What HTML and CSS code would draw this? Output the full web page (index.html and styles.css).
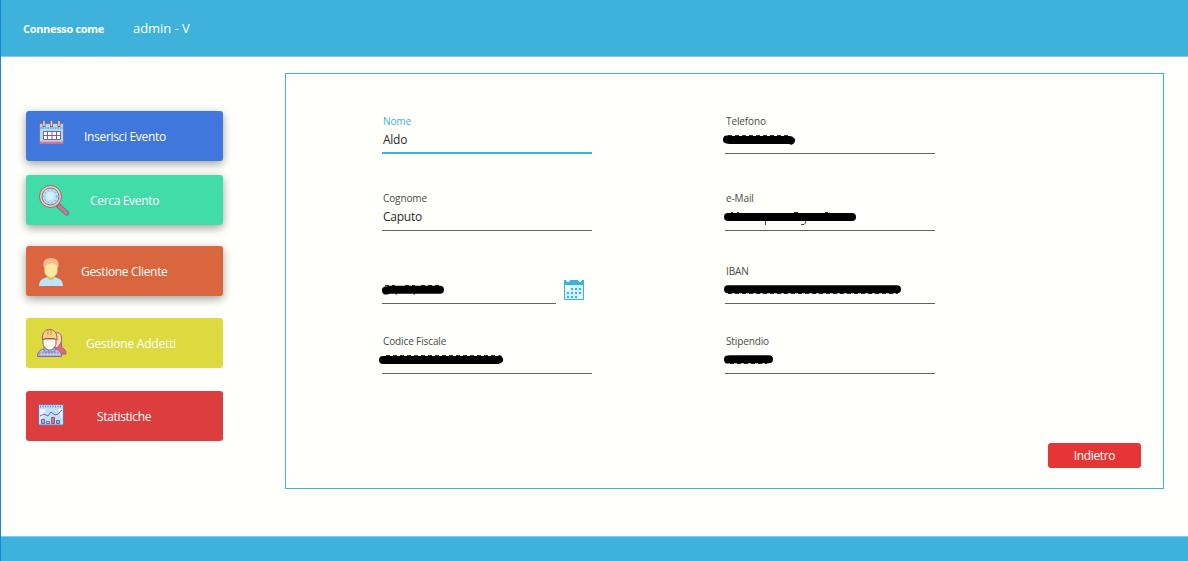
FILE: index.html
```
<!DOCTYPE html>
<html lang="it">
<head>
<meta charset="utf-8">
<title>Gestione Addetti</title>
<link rel="stylesheet" href="styles.css">
</head>
<body>
<div class="app">
  <header class="topbar"><span class="connected">Connesso come</span><span class="user">admin - V</span></header>
  <main class="main">
    <nav class="sidebar">
      <button class="menu blue raised">
        <svg class="icon" width="32" height="34" viewBox="0 3 32 34">
          <path d="M3.500 7.500h24v20h-24z" fill="#a9defb" stroke="#7d74b0"/>
          <path d="M4 25.500h23v2H4z" fill="#f3708b"/>
          <path d="M4 12h23" stroke="#7668a6" stroke-dasharray="1.500 1"/>
          <path d="M7.500 15.500h17v8h-17z" fill="#fff" stroke="#7d5e96"/>
          <path d="M11.500 15.500v8M16 15.500v8M20.500 15.500v8M7.500 19.500h17" stroke="#7d5e96"/>
          <path d="M8 5v6M15.500 5v6M23 5v6" stroke="#805b8b" stroke-width="3"/>
          <path d="M8 5v5M15.500 5v5M23 5v5" stroke="#ffe6a7" stroke-width="1.400"/>
        </svg><span class="label l1">Inserisci Evento</span></button>
      <button class="menu green raised">
        <svg class="icon" width="34" height="34" viewBox="0 0 34 34">
          <path d="M22.500 22.500l8 7.500" stroke="#77629a" stroke-width="5" stroke-linecap="round"/>
          <path d="M23.500 23.500l7 6.500" stroke="#c08088" stroke-width="3.200" stroke-linecap="round"/>
          <circle cx="14.500" cy="13.500" r="11" fill="#fdd390" stroke="#80659a"/>
          <circle cx="14.500" cy="13.500" r="8.500" fill="#b9e0fa" stroke="#7868a0"/>
          <circle cx="14.500" cy="13.500" r="6.300" fill="none" stroke="#779ccc" stroke-dasharray="1.500 2.200"/>
          <circle cx="14" cy="13" r="4" fill="#d2f1ff"/>
        </svg><span class="label l2">Cerca Evento</span></button>
      <button class="menu orange raised">
        <svg class="icon" width="32" height="34" viewBox="0 0 32 34">
          <path d="M3 32c0-6 4-8 9-9h6c5 1 9 3 9 9z" fill="#bce3fb"/>
          <path d="M11.500 20h7v4q-3.500 4-7 0z" fill="#d9bd52"/>
          <path d="M8.500 12c0-5 13-5 13 0v5c0 4-4 6.500-6.500 6.500s-6.500-2.500-6.500-6.500z" fill="#ffe9a1"/>
          <path d="M8 14C6 7 9 4.500 15 4c6 0 9 4 7 10l-2-3-4-2-5 2z" fill="#ffb994"/>
        </svg><span class="label l3">Gestione Cliente</span></button>
      <button class="menu yellow">
        <svg class="icon" width="34" height="34" viewBox="0 0 34 34">
          <path d="M18 15h7l1 7c3 1 4 3 4 6H19z" fill="#ed6479" stroke="#936495"/>
          <path d="M18 8c6-4 9 2 7 9l-4 5-4-2z" fill="#ffdca5" stroke="#936495"/>
          <path d="M1.500 30.500c0-6 4-7 8-8h8c5 1 8 3 8 8z" fill="#c9bddf" stroke="#8b6595"/>
          <path d="M3 27h22v3H3z" fill="#b2cfef" stroke="#836b9b" stroke-width=".7" stroke-dasharray="2 1"/>
          <path d="M8 21l5.500 4 5.500-4v5H8z" fill="#9eb9e3" stroke="#8b6595" stroke-width=".7"/>
          <path d="M7 13h13v4c0 4-4 7-6.500 7S7 21 7 17z" fill="#fff8e5" stroke="#8b6595"/>
          <path d="M6.500 14v-2c0-6 3-8.500 7-8.500s7.500 2.500 7.500 8.500v2l-3-1.500H9z" fill="#ffd176" stroke="#936078"/>
          <path d="M12 4v5M15 4v5" stroke="#a87878" stroke-width=".8"/>
        </svg><span class="label l4">Gestione Addetti</span></button>
      <button class="menu red">
        <svg class="icon" width="32" height="34" viewBox="0 2 32 34">
          <path d="M2.500 7.500h25v20.500h-25z" fill="#bfe2fa" stroke="#8468a2"/>
          <path d="M3 8h24v3H3z" fill="#c5d9f5"/>
          <path d="M4 9.500h22" stroke="#7869a5" stroke-width="1.500" stroke-dasharray="1 1.500"/>
          <path d="M4 12h6l-5 12zM22 12h4v10z" fill="#f2f7ff"/>
          <path d="M4 19l4-2 4 2 3-4 4 3 3-1 4-4" fill="none" stroke="#7c6092"/>
          <path d="M5.500 22.500h3v4h-3z" fill="#8ac5ee" stroke="#706294"/>
          <path d="M10.500 24.500h3v2h-3z" fill="#ffe09a" stroke="#706294"/>
          <path d="M15.500 20.500h3v6h-3z" fill="#f26d7e" stroke="#87558a"/>
          <path d="M20.500 23.500h3v3h-3z" fill="#79cfd2" stroke="#706294"/>
        </svg><span class="label l5">Statistiche</span></button>
    </nav>
    <section class="panel">
      <form class="form">
        <div class="field active"><label class="name">Nome</label><span class="value">Aldo</span></div>
        <div class="field"><label class="name">Telefono</label>
          <svg class="redacted" width="214" height="20"><path d="M7 5.500h60" class="trace"/><path d="M6 9.500l3 .5h60l1 .5" class="bar"/></svg></div>
        <div class="field"><label class="name">Cognome</label><span class="value">Caputo</span></div>
        <div class="field"><label class="name">e-Mail</label>
          <svg class="redacted" width="214" height="20"><path d="M10 5.500h2M16 5.500h2M73 5.500h4M104 5.500h3" class="trace solid"/><path d="M44.500 12v6M80 17.500h3q2-1 2-4" class="stroke"/><path d="M7 10h124" class="bar"/></svg></div>
        <div class="date-row">
          <div class="field date"><label class="name"></label>
            <svg class="redacted" width="178" height="20"><path d="M7 5.500h10M27 5.500h10M43 5.500h19" class="trace"/><path d="M19 12l-1 3M37 12l-1 3" class="stroke"/><path d="M8 10.500l3-.7h51" class="bar"/></svg></div>
          <svg class="calendar" width="20" height="20" viewBox="0 0 20 20" shape-rendering="crispEdges">
            <path d="M0 0h20v20H0z" fill="#3db2da"/><path d="M1 5h18v14H1z" fill="#d5f0f9"/>
            <path d="M2 6h4v4H2zM15 15h3v4h-3zM2 0h4v1H2zM14 0h4v1h-4zM3 1h2v1H3zM15 1h2v1h-2z" fill="#fff"/>
            <path d="M7 8h2v2H7zm4 0h2v2h-2zm4 0h2v2h-2zM3 12h2v2H3zm4 0h2v2H7zm4 0h2v2h-2zm4 0h2v2h-2zM3 16h2v2H3zm4 0h2v2H7zm4 0h2v2h-2z" fill="#3db2da"/>
          </svg>
        </div>
        <div class="field"><label class="name">IBAN</label>
          <svg class="redacted" width="214" height="20"><path d="M7 13.500h170" class="trace"/><path d="M7 9.300h169" class="bar"/></svg></div>
        <div class="field"><label class="name">Codice Fiscale</label>
          <svg class="redacted" width="214" height="20"><path d="M8 5.500h110" class="trace"/><path d="M5 10h115l1-.5" class="bar"/></svg></div>
        <div class="field"><label class="name">Stipendio</label>
          <svg class="redacted" width="214" height="20"><path d="M9 13.500h37" class="trace"/><path d="M7 9.500l3-.3h38" class="bar"/></svg></div>
      </form>
      <button class="back"><span>Indietro</span></button>
    </section>
  </main>
  <footer class="bottombar"></footer>
</div>
</body>
</html>
```
FILE: styles.css
```
* { box-sizing: border-box; }
body { margin: 0; font-family: "Open Sans", "Noto Sans", sans-serif; font-size: 12px; color: #292929; }
button { font: inherit; border: 0; padding: 0; color: #fff; }
.app { width: 1188px; height: 561px; display: flex; flex-direction: column; background: #fffffb; border-left: 1px solid #1a82dc; overflow: hidden; }
.topbar { height: 57px; flex: none; background: #3eb2da; border-bottom: 1px solid #85c9f6; display: flex; align-items: center; padding-left: 22px; color: #fff; }
.connected { width: 110px; font-size: 11px; font-weight: 700; letter-spacing: -.33px; white-space: nowrap; }
.user { font-size: 13px; letter-spacing: -.05px; }
.main { flex: 1; display: flex; }
.sidebar { width: 284px; padding: 54px 0 0 25px; display: flex; flex-direction: column; }
.menu { width: 197px; height: 50px; flex: none; border-radius: 3px; display: flex; align-items: center; padding-left: 10px; text-align: left; }
.icon { flex: none; }
.label { white-space: nowrap; }
.raised { box-shadow: 0 3px 10px rgba(0,0,0,.38); }
.blue { background: #4077dc; }
.green { background: #42dca8; margin-top: 14px; }
.orange { background: #da663f; margin-top: 21px; }
.yellow { background: #dcda3e; margin-top: 22px; }
.red { background: #dc3e40; margin-top: 23px; }
.l1 { margin-left: 16px; letter-spacing: -.32px; }
.l2 { margin-left: 20px; letter-spacing: -.33px; }
.l3 { margin-left: 13px; letter-spacing: -.32px; }
.l4 { margin-left: 16px; letter-spacing: -.23px; }
.l5 { margin-left: 29px; letter-spacing: -.33px; }
.panel { width: 879px; height: 416px; margin-top: 16px; border: 1px solid #3eb2da; display: flex; flex-direction: column; }
.form { height: 369px; padding: 40px 0 0 96px; display: grid; grid-template-columns: 210px 210px; grid-template-rows: 77px 73px 70px 40px; column-gap: 133px; }
.field { width: 210px; height: 40px; border-bottom: 1px solid #62625f; }
.field.active { border-bottom: 2px solid #3eb2da; }
.name { display: block; height: 14px; padding-left: 1px; font-size: 10px; line-height: 15px; letter-spacing: -.12px; color: #484848; }
.active .name { color: #3eb2da; }
.value { display: block; padding: 3px 0 0 1px; line-height: 18px; letter-spacing: -.25px; }
.redacted { display: block; margin: 2px 0 0 -4px; }
.bar { fill: none; stroke: #000; stroke-width: 8; stroke-linecap: round; stroke-linejoin: round; }
.trace { fill: none; stroke: #333; stroke-width: 1; stroke-dasharray: 4 3; }
.solid { stroke-dasharray: none; }
.stroke { fill: none; stroke: #444; stroke-width: 1; }
.date-row { display: flex; gap: 8px; }
.date { width: 174px; }
.calendar { margin-top: 16px; }
.back { align-self: flex-end; width: 93px; height: 25px; margin-right: 22px; background: #e43637; border-radius: 3px; letter-spacing: -.35px; }
.bottombar { height: 25px; background: #3eb2da; border-top: 1px solid #85c9f6; }
```
